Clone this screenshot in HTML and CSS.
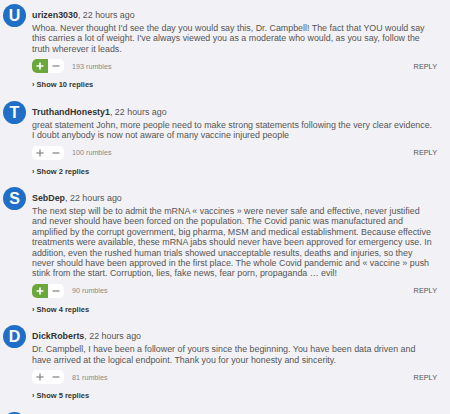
FILE: index.html
```html
<!DOCTYPE html>
<html lang="en">
<head>
<meta charset="utf-8">
<title>Comments</title>
<link rel="stylesheet" href="styles.css">
</head>
<body>
<div class="comments">
  <article class="comment">
    <div class="avatar">U</div>
    <div class="content">
      <div class="meta"><b class="user">urizen3030</b>, 22 hours ago</div>
      <p class="text">Whoa. Never thought I'd see the day you would say this, Dr. Campbell! The fact that YOU would say this carries a lot of weight. I've always viewed you as a moderate who would, as you say, follow the truth wherever it leads.</p>
      <div class="actions">
        <div class="vote">
          <span class="up active"><svg width="8" height="8" viewBox="0 0 8 8"><path d="M4 0.5v7M0.5 4h7" stroke="#fff" stroke-width="1.7"/></svg></span>
          <span class="down"><svg width="8" height="8" viewBox="0 0 8 8"><path d="M0.5 4h7" stroke="#999" stroke-width="1.5"/></svg></span>
        </div>
        <span class="rumbles">193 rumbles</span>
        <span class="reply">REPLY</span>
      </div>
      <div class="replies">› Show 10 replies</div>
    </div>
  </article>
  <article class="comment">
    <div class="avatar">T</div>
    <div class="content">
      <div class="meta"><b class="user">TruthandHonesty1</b>, 22 hours ago</div>
      <p class="text">great statement John, more people need to make strong statements following the very clear evidence.<br>I doubt anybody is now not aware of many vaccine injured people</p>
      <div class="actions">
        <div class="vote">
          <span class="up"><svg width="8" height="8" viewBox="0 0 8 8"><path d="M4 0.5v7M0.5 4h7" stroke="#999" stroke-width="1.5"/></svg></span>
          <span class="down"><svg width="8" height="8" viewBox="0 0 8 8"><path d="M0.5 4h7" stroke="#999" stroke-width="1.5"/></svg></span>
        </div>
        <span class="rumbles">100 rumbles</span>
        <span class="reply">REPLY</span>
      </div>
      <div class="replies">› Show 2 replies</div>
    </div>
  </article>
  <article class="comment">
    <div class="avatar">S</div>
    <div class="content">
      <div class="meta"><b class="user">SebDep</b>, 22 hours ago</div>
      <p class="text">The next step will be to admit the mRNA « vaccines » were never safe and effective, never justified and never should have been forced on the population. The Covid panic was manufactured and amplified by the corrupt government, big pharma, MSM and medical establishment. Because effective treatments were available, these mRNA jabs should never have been approved for emergency use. In addition, even the rushed human trials showed unacceptable results, deaths and injuries, so they never should have been approved in the first place. The whole Covid pandemic and « vaccine » push stink from the start. Corruption, lies, fake news, fear porn, propaganda … evil!</p>
      <div class="actions">
        <div class="vote">
          <span class="up active"><svg width="8" height="8" viewBox="0 0 8 8"><path d="M4 0.5v7M0.5 4h7" stroke="#fff" stroke-width="1.7"/></svg></span>
          <span class="down"><svg width="8" height="8" viewBox="0 0 8 8"><path d="M0.5 4h7" stroke="#999" stroke-width="1.5"/></svg></span>
        </div>
        <span class="rumbles">90 rumbles</span>
        <span class="reply">REPLY</span>
      </div>
      <div class="replies">› Show 4 replies</div>
    </div>
  </article>
  <article class="comment">
    <div class="avatar">D</div>
    <div class="content">
      <div class="meta"><b class="user">DickRoberts</b>, 22 hours ago</div>
      <p class="text">Dr. Campbell, I have been a follower of yours since the beginning. You have been data driven and have arrived at the logical endpoint. Thank you for your honesty and sincerity.</p>
      <div class="actions">
        <div class="vote">
          <span class="up"><svg width="8" height="8" viewBox="0 0 8 8"><path d="M4 0.5v7M0.5 4h7" stroke="#999" stroke-width="1.5"/></svg></span>
          <span class="down"><svg width="8" height="8" viewBox="0 0 8 8"><path d="M0.5 4h7" stroke="#999" stroke-width="1.5"/></svg></span>
        </div>
        <span class="rumbles">81 rumbles</span>
        <span class="reply">REPLY</span>
      </div>
      <div class="replies">› Show 5 replies</div>
    </div>
  </article>
  <article class="comment">
    <div class="avatar"></div>
    <div class="content"></div>
  </article>
</div>
</body>
</html>
```

FILE: styles.css
```css
html, body {
  margin: 0;
  background: #f2f2f6;
}

body {
  font-family: "Liberation Sans", Arial, sans-serif;
  color: #555;
  overflow: hidden;
}

.comments {
  display: flex;
  flex-direction: column;
  gap: 10.5px;
  padding: 4px 13px 0 3px;
}

.comment {
  display: grid;
  grid-template-columns: 23px 1fr;
  column-gap: 6px;
}

.avatar {
  width: 23px;
  height: 23px;
  border-radius: 50%;
  background: #1f6fc6;
  color: #fff;
  font-weight: bold;
  font-size: 16px;
  line-height: 23px;
  text-align: center;
}

.meta {
  margin-top: 6px;
  font-size: 8.9px;
  line-height: 11px;
  color: #555;
}

.user {
  color: #333;
}

.text {
  margin: 2px 2px 0 0;
  font-size: 8.9px;
  line-height: 10.4px;
  color: #555;
}

.actions {
  display: flex;
  align-items: center;
  height: 14px;
  margin-top: 5px;
}

.vote {
  display: flex;
  width: 32px;
  height: 14px;
  border-radius: 5px;
  overflow: hidden;
  background: #fff;
}

.vote span {
  flex: 1;
  display: flex;
  align-items: center;
  justify-content: center;
}

.vote .active {
  background: #6aa83b;
}

.rumbles {
  margin-left: 8px;
  font-size: 7.2px;
  color: #888;
}

.reply {
  margin-left: auto;
  font-size: 7.3px;
  color: #555;
}

.replies {
  margin-top: 7px;
  font-size: 7.5px;
  line-height: 10px;
  font-weight: bold;
  color: #333;
}
```
